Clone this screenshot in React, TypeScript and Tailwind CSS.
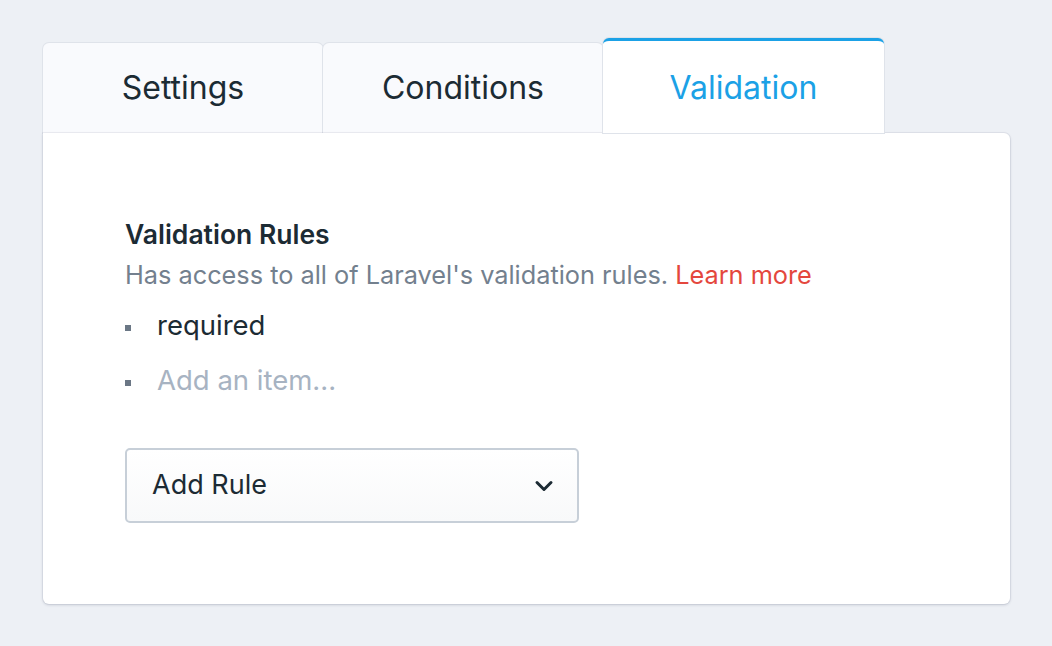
import React from "react";

export default function App() {
  return (
    <div className="min-h-[646px] w-full bg-[#edf0f5] pt-[38px] pl-[43px] pr-[42px]" style={{ fontFamily: "Inter, 'Noto Sans', sans-serif" }}>
      <div className="w-[967px]">
        <div className="flex items-end h-[95px]">
          <div className="w-[280px] h-[90px] flex items-center justify-center bg-[#f9fafd] rounded-t-[6px] shadow-[0_0_0_1px_#dfe3ea] text-[32px] text-[#1c2b34] relative z-0">
            Settings
          </div>
          <div className="w-[280px] h-[90px] flex items-center justify-center bg-[#f9fafd] rounded-t-[6px] shadow-[0_0_0_1px_#dfe3ea] text-[32px] text-[#1c2b34] relative z-0">
            Conditions
          </div>
          <div className="w-[281px] h-[95px] flex items-center justify-center bg-white rounded-t-[6px] border-t-[3px] border-[#1ba1e6] shadow-[0_0_0_1px_#dfe3ea] text-[32px] text-[#1ba1e6] relative z-20">
            <span className="pt-[2px]">Validation</span>
          </div>
        </div>
        <div className="relative z-10 bg-white rounded-b-[6px] rounded-tr-[6px] shadow-[0_1px_3px_rgba(30,40,70,0.18),0_0_0_1px_rgba(30,40,70,0.05)] h-[471px] pl-[82px] pt-[85px]">
          <div className="text-[26.5px] font-semibold text-[#1c2b34] leading-[32px]">Validation Rules</div>
          <div className="text-[25.3px] text-[#73808e] leading-[34px] mt-[8px]">
            Has access to all of Laravel's validation rules. <span className="text-[#e4473d]">Learn more</span>
          </div>
          <div className="mt-[14px]">
            <div className="flex items-center h-[40px]">
              <span className="w-[6px] h-[6px] bg-[#6b7785] mt-[4px]"></span>
              <span className="ml-[26px] text-[27.5px] text-[#1c2b34]">required</span>
            </div>
            <div className="flex items-center h-[40px] mt-[15px]">
              <span className="w-[6px] h-[6px] bg-[#6b7785] mt-[4px]"></span>
              <span className="ml-[26px] text-[27.5px] text-[#a7b3c2]">Add an item...</span>
            </div>
          </div>
          <div className="mt-[47px] w-[454px] h-[75px] rounded-[5px] border-2 border-[#c7cfd8] bg-gradient-to-b from-white to-[#f8f9fa] flex items-center justify-between pl-[25px] pr-[21px]">
            <span className="text-[27px] text-[#1c2b34]">Add Rule</span>
            <svg width="24" height="24" viewBox="0 0 24 24" fill="none" stroke="#1c2b34" strokeWidth="3" strokeLinecap="round" strokeLinejoin="round">
              <path d="M5 8.5l7 7 7-7" />
            </svg>
          </div>
        </div>
      </div>
    </div>
  );
}
